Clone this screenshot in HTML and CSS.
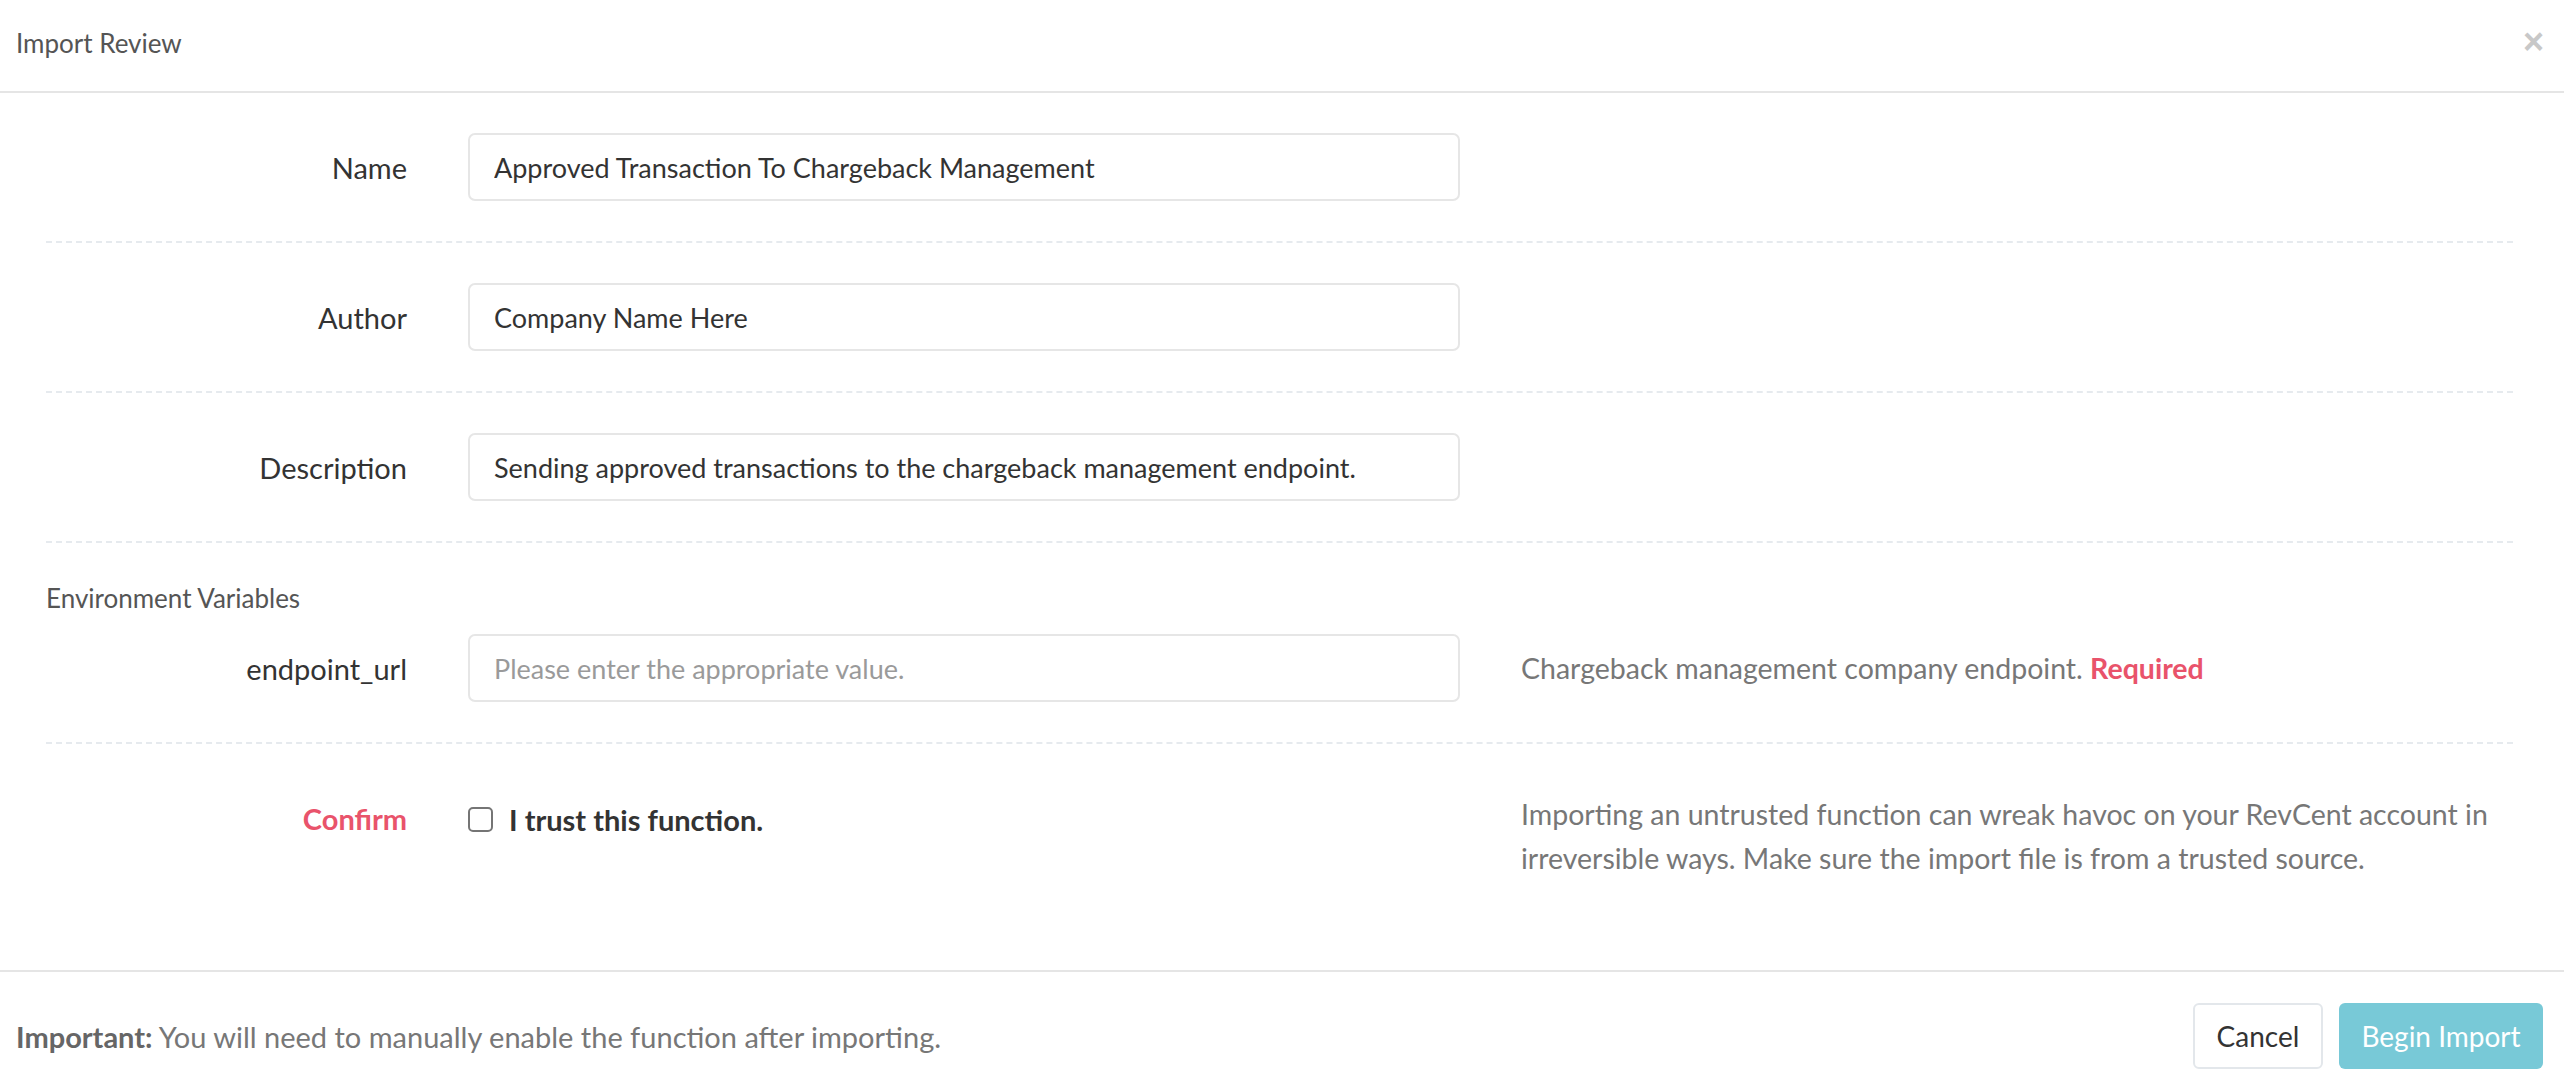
FILE: index.html
```html
<!DOCTYPE html>
<html lang="en">
  <head>
    <meta charset="UTF-8" />
    <meta name="viewport" content="width=device-width, initial-scale=1.0" />
    <title>Import Review</title>
    <link rel="stylesheet" href="styles.css">
  </head>
  <body>
    <div class="modal">
      <!-- Header -->
      <div class="modal-header">
        <h4 class="modal-title">Import Review</h4>
        <button type="button" class="close">&times;</button>
      </div>

      <!-- Body -->
      <div class="modal-body">
        <div class="form-row">
          <label class="row-label" for="name">Name</label>
          <input type="text" id="name" class="form-control" value="Approved Transaction To Chargeback Management" />
          <div class="help"></div>
        </div>

        <div class="form-row">
          <label class="row-label" for="author">Author</label>
          <input type="text" id="author" class="form-control" value="Company Name Here" />
          <div class="help"></div>
        </div>

        <div class="form-row">
          <label class="row-label" for="description">Description</label>
          <input type="text" id="description" class="form-control" value="Sending approved transactions to the chargeback management endpoint." />
          <div class="help"></div>
        </div>

        <div class="form-row env-row">
          <div class="section-title">Environment Variables</div>
          <label class="row-label" for="endpoint_url">endpoint_url</label>
          <input type="text" id="endpoint_url" class="form-control" placeholder="Please enter the appropriate value." />
          <div class="help">Chargeback management company endpoint. <span class="required">Required</span></div>
        </div>

        <div class="form-row confirm-row">
          <div class="row-label confirm-label">Confirm</div>
          <label class="check">
            <input type="checkbox" />
            <span>I trust this function.</span>
          </label>
          <div class="help">Importing an untrusted function can wreak havoc on your RevCent account in irreversible ways. Make sure the import file is from a trusted source.</div>
        </div>
      </div>

      <!-- Footer -->
      <div class="modal-footer">
        <p class="note"><strong>Important:</strong> You will need to manually enable the function after importing.</p>
        <div class="actions">
          <button type="button" class="btn btn-default">Cancel</button>
          <button type="button" class="btn btn-info" disabled>Begin Import</button>
        </div>
      </div>
    </div>
  </body>
</html>
```

FILE: styles.css
```css
body {
  margin: 0;
  font-family: "Source Sans Pro", Lato, "Noto Sans", sans-serif;
  font-size: 29px;
  color: #333;
  background: #fff;
}
.modal-header {
  display: flex;
  align-items: center;
  justify-content: space-between;
  height: 91px;
  padding: 0 16px;
  border-bottom: 2px solid #e5e5e5;
}
.modal-title {
  margin: 0;
  font-size: 26px;
  font-weight: 400;
  color: #555;
  margin-top: -6px;
}
.close {
  background: none;
  border: none;
  padding: 0;
  font-family: "Liberation Sans", Arial, sans-serif;
  font-size: 36px;
  font-weight: bold;
  line-height: 1;
  color: #c8c8c8;
  margin-top: -8px;
  margin-right: 4px;
  cursor: pointer;
}
.modal-body {
  padding: 0 51px 50px 46px;
}
.form-row {
  display: grid;
  grid-template-columns: 361px 992px 1fr;
  column-gap: 61px;
  align-items: center;
  padding: 40px 0;
  border-bottom: 2px dashed #e6eaee;
}
.row-label {
  text-align: right;
  color: #333;
}
.form-control {
  box-sizing: border-box;
  height: 68px;
  width: 100%;
  padding: 0 24px;
  font: inherit;
  font-size: 27px;
  color: #333;
  border: 2px solid #e6e6e6;
  border-radius: 7px;
  outline: none;
}
.form-control::placeholder {
  color: #9a9a9a;
}
.help {
  color: #777;
  font-size: 28.5px;
  line-height: 44px;
}
.required {
  color: #e9536b;
  font-weight: 700;
}
.section-title {
  grid-column: 1 / -1;
  font-size: 26px;
  line-height: 31px;
  color: #555;
  margin-bottom: 20px;
}
.confirm-row {
  align-items: start;
  border-bottom: none;
  padding-top: 48px;
}
.confirm-label {
  color: #e9536b;
  font-weight: 700;
  line-height: 44px;
  margin-top: 5px;
}
.check {
  display: flex;
  align-items: center;
  gap: 16px;
  height: 44px;
  margin-top: 5px;
  font-weight: 700;
  color: #333;
}
.check input {
  margin: 0;
  width: 25px;
  height: 25px;
  appearance: none;
  border: 2px solid #757575;
  border-radius: 5px;
  background: #fff;
}
.modal-footer {
  display: flex;
  align-items: center;
  justify-content: space-between;
  padding: 31px 21px 31px 16px;
  border-top: 2px solid #e5e5e5;
}
.note {
  margin: 0;
  color: #777;
}
.note strong {
  color: #666;
}
.actions {
  display: flex;
  gap: 16px;
}
.btn {
  height: 66px;
  padding: 0 20px;
  font: inherit;
  font-size: 28px;
  border-radius: 6px;
  cursor: pointer;
}
.btn-default {
  background: #fff;
  color: #333;
  border: 2px solid #e3e7eb;
  width: 130px;
}
.btn-info {
  background: #78c9d7;
  color: #fff;
  border: none;
  width: 204px;
}
```
